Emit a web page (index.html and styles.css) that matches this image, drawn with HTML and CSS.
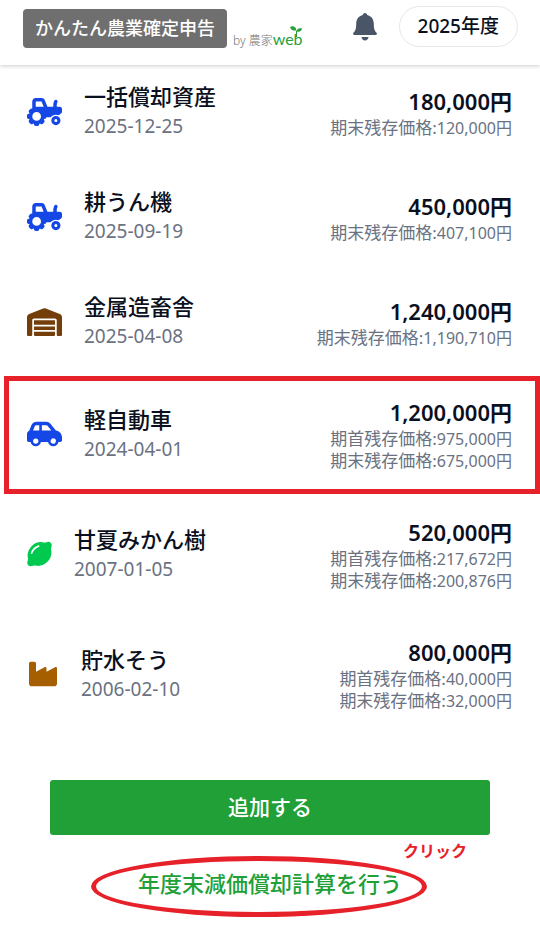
FILE: index.html
```html
<!DOCTYPE html>
<html lang="ja">
<head>
<meta charset="utf-8">
<meta name="viewport" content="width=device-width, initial-scale=1">
<title>かんたん農業確定申告</title>
<link rel="stylesheet" href="styles.css">
</head>
<body>
<svg class="sprite" aria-hidden="true">
  <symbol id="tractor" viewBox="0 0 640 512"><path fill-rule="evenodd" d="M96 64c0-35.300 28.700-64 64-64H266.300c26.200 0 49.700 15.900 59.400 40.200L373.700 160H480V126.200c0-24.800 5.800-49.300 16.900-71.600l2.500-5c7.900-15.800 27.100-22.200 42.900-14.300s22.200 27.100 14.300 42.900l-2.500 5c-6.700 13.300-10.100 28-10.100 42.900V160h56c22.100 0 40 17.900 40 40v45.400c0 16.500-8.500 31.900-22.600 40.700l-43.300 27.100c-14.200-5.900-29.800-9.200-46.100-9.200c-39.300 0-74.100 18.900-96 48H352c0 17.700-14.300 32-32 32h-8.200c-1.700 4.800-3.700 9.500-5.800 14.100l5.800 5.800c12.500 12.500 12.500 32.800 0 45.300l-22.600 22.600c-12.500 12.500-32.800 12.500-45.300 0l-5.800-5.800c-4.600 2.200-9.300 4.100-14.100 5.800V480c0 17.700-14.300 32-32 32H160c-17.700 0-32-14.300-32-32v-8.200c-4.800-1.700-9.500-3.700-14.100-5.800l-5.800 5.800c-12.500 12.500-32.800 12.500-45.300 0L40.200 449.100c-12.500-12.500-12.500-32.800 0-45.300l5.800-5.800c-2.200-4.600-4.100-9.300-5.800-14.100H32c-17.700 0-32-14.300-32-32V320c0-17.700 14.300-32 32-32h8.200c1.700-4.800 3.700-9.500 5.800-14.100l-5.800-5.800c-12.500-12.500-12.500-32.800 0-45.300l22.600-22.600c9-9 21.900-11.500 33.100-7.600V64zm170.300 0H160v96H304.700L266.300 64zM176 256a80 80 0 1 0 0 160 80 80 0 1 0 0-160zM528 328a84 84 0 1 1 0 168 84 84 0 1 1 0-168zm0 56a28 28 0 1 0 0 56 28 28 0 1 0 0-56z"/></symbol>
  <symbol id="warehouse" viewBox="0 0 640 512"><path d="M0 488V171.300c0-26.200 15.900-49.700 40.200-59.400L308.100 4.800c7.600-3.100 16.100-3.100 23.800 0L599.800 111.900c24.300 9.700 40.200 33.300 40.200 59.400V488c0 13.300-10.700 24-24 24H568c-13.300 0-24-10.700-24-24V224c0-17.700-14.300-32-32-32H128c-17.700 0-32 14.300-32 32V488c0 13.300-10.700 24-24 24H24c-13.300 0-24-10.700-24-24zm488 24H152c-13.300 0-24-10.700-24-24V432H512v56c0 13.300-10.700 24-24 24zM128 400V336H512v64H128zm0-96V224H512v80H128z"/></symbol>
  <symbol id="car" viewBox="0 0 640 512"><path d="M171.300 96H224v96H111.300l30.400-75.900C146.500 104 158.200 96 171.300 96zM272 192V96h81.200c9.700 0 18.900 4.400 25 12l67 84H272zm256.200 1L428.200 68c-18.200-22.800-45.800-36-75-36H171.300c-39.300 0-74.600 23.900-89.100 60.300L40.600 196.400C16.800 205.800 0 228.900 0 256V368c0 17.700 14.300 32 32 32H65.300c7.600 45.400 47.100 80 94.700 80s87.100-34.600 94.700-80H385.300c7.600 45.400 47.100 80 94.700 80s87.100-34.600 94.700-80H608c17.700 0 32-14.300 32-32V320c0-65.200-48.800-119-111.800-127zM434.700 368a48 48 0 1 1 90.500 32 48 48 0 1 1-90.500-32zM160 336a48 48 0 1 1 0 96 48 48 0 1 1 0-96z"/></symbol>
  <symbol id="lemon" viewBox="0 0 448 512"><path d="M448 96c0-35.300-28.700-64-64-64c-6.600 0-13 1-19 2.900c-22.500 7-48.100 14.900-71 9c-75.200-19.100-156.400 11-213.700 68.300S-7.200 250.800 11.900 326c5.800 22.900-2 48.400-9 71C1 403 0 409.400 0 416c0 35.300 28.700 64 64 64c6.600 0 13-1 19.100-2.900c22.500-7 48.100-14.900 71-9c75.200 19.100 156.400-11 213.700-68.300s87.500-138.500 68.300-213.700c-5.800-22.900 2-48.400 9-71c1.900-6 2.900-12.400 2.900-19.100zM212.500 127.400c-54.600 16-101.100 62.500-117.100 117.100C92.900 253 84 257.800 75.500 255.400S62.200 244 64.600 235.500c19.100-65.100 73.700-119.800 138.900-138.900c8.500-2.500 17.400 2.400 19.900 10.900s-2.400 17.400-10.900 19.900z"/></symbol>
  <symbol id="factory" viewBox="0 0 576 512"><path d="M64 32C46.300 32 32 46.300 32 64V432c0 26.500 21.500 48 48 48H496c26.500 0 48-21.500 48-48V152.200c0-18.200-19.400-29.700-35.400-21.100L352 215.400V152.200c0-18.200-19.400-29.700-35.400-21.100L160 215.400V64c0-17.700-14.300-32-32-32H64z"/></symbol>
</svg>

<header class="header">
  <a class="brand" href="#">
    <span class="brand-name">かんたん農業確定申告</span>
    <span class="brand-by">by 農家<span class="brand-web">web<svg class="sprout" viewBox="0 0 12 12" aria-hidden="true"><path d="M0 1C3-.5 6 .5 6.300 4.500 3 5 1 4 0 1zM12 2.500C9 1.500 6.600 3 6.800 5.600 9.500 6.200 11.500 5.500 12 2.500z"/><path class="stem" d="M6.500 4.500V11"/></svg></span></span>
  </a>
  <button class="bell" type="button" aria-label="お知らせ">
    <svg viewBox="0 0 24 28" aria-hidden="true"><path d="M12 0c1.200 0 2 .8 2.100 2 4.300.9 6.700 4.400 6.700 8.800 0 5.200.8 6.900 2.700 8.900.9 1 .4 2.300-.9 2.300H1.400C.1 22-.4 20.700.5 19.700c1.900-2 2.700-3.700 2.700-8.900C3.200 6.400 5.600 2.900 9.900 2 10 .8 10.800 0 12 0zM8.400 24h7.200c-.3 2-1.700 3.400-3.600 3.400S8.700 26 8.400 24z"/></svg>
  </button>
  <button class="year" type="button">2025年度</button>
</header>

<main>
  <ul class="assets">
    <li class="asset">
      <svg class="icon icon-wide blue" aria-hidden="true"><use href="#tractor"/></svg>
      <div class="info"><p class="name">一括償却資産</p><p class="date">2025-12-25</p></div>
      <div class="values"><p class="amount">180,000円</p><p class="rest"><span class="label">期末残存価格:</span>120,000円</p></div>
    </li>
    <li class="asset">
      <svg class="icon icon-wide blue" aria-hidden="true"><use href="#tractor"/></svg>
      <div class="info"><p class="name">耕うん機</p><p class="date">2025-09-19</p></div>
      <div class="values"><p class="amount">450,000円</p><p class="rest"><span class="label">期末残存価格:</span>407,100円</p></div>
    </li>
    <li class="asset">
      <svg class="icon icon-wide brown" aria-hidden="true"><use href="#warehouse"/></svg>
      <div class="info"><p class="name">金属造畜舎</p><p class="date">2025-04-08</p></div>
      <div class="values"><p class="amount">1,240,000円</p><p class="rest"><span class="label">期末残存価格:</span>1,190,710円</p></div>
    </li>
    <li class="asset marked">
      <svg class="icon icon-wide blue" aria-hidden="true"><use href="#car"/></svg>
      <div class="info"><p class="name">軽自動車</p><p class="date">2024-04-01</p></div>
      <div class="values"><p class="amount">1,200,000円</p><p class="rest"><span class="label">期首残存価格:</span>975,000円</p><p class="rest"><span class="label">期末残存価格:</span>675,000円</p></div>
    </li>
    <li class="asset">
      <svg class="icon icon-narrow green" aria-hidden="true"><use href="#lemon"/></svg>
      <div class="info"><p class="name">甘夏みかん樹</p><p class="date">2007-01-05</p></div>
      <div class="values"><p class="amount">520,000円</p><p class="rest"><span class="label">期首残存価格:</span>217,672円</p><p class="rest"><span class="label">期末残存価格:</span>200,876円</p></div>
    </li>
    <li class="asset">
      <svg class="icon icon-medium ochre" aria-hidden="true"><use href="#factory"/></svg>
      <div class="info"><p class="name">貯水そう</p><p class="date">2006-02-10</p></div>
      <div class="values"><p class="amount">800,000円</p><p class="rest"><span class="label">期首残存価格:</span>40,000円</p><p class="rest"><span class="label">期末残存価格:</span>32,000円</p></div>
    </li>
  </ul>
  <div class="actions">
    <button class="add" type="button">追加する</button>
    <a class="calc" href="#">年度末減価償却計算を行う<span class="hint">クリック</span></a>
  </div>
</main>
</body>
</html>
```
FILE: styles.css
```css
* {
  box-sizing: border-box;
}

body {
  margin: 0;
  background: #fff;
  color: #0b1020;
  font-family: "Noto Sans", "Noto Sans CJK JP", sans-serif;
}

p,
ul {
  margin: 0;
  padding: 0;
}

button {
  font: inherit;
  cursor: pointer;
}

a {
  text-decoration: none;
}

.sprite {
  display: none;
}

.header {
  position: sticky;
  top: 0;
  z-index: 1;
  display: flex;
  align-items: flex-start;
  height: 65px;
  padding: 6px 22px 0 23px;
  background: #fff;
  box-shadow: 0 1px 4px rgba(0, 0, 0, 0.2);
}

.brand {
  display: flex;
  align-items: flex-end;
  gap: 6px;
  margin-top: 3px;
}

.brand-name {
  padding: 0 12px;
  border-radius: 4px;
  background: #6f6f6f;
  color: #fff;
  font-size: 18px;
  font-weight: 500;
  line-height: 39px;
}

.brand-by {
  color: #777;
  font-size: 12px;
  font-weight: 300;
  line-height: 14px;
  white-space: nowrap;
}

.brand-web {
  position: relative;
  color: #27a03c;
  font-family: Lato, sans-serif;
  font-size: 16px;
  font-weight: 400;
}

.sprout {
  position: absolute;
  right: 1px;
  top: -3px;
  width: 12px;
  height: 12px;
  fill: #27a03c;
}

.stem {
  fill: none;
  stroke: #27a03c;
}

.bell {
  width: 24px;
  height: 28px;
  margin: 7px 22px 0 auto;
  padding: 0;
  border: 0;
  background: none;
}

.bell svg {
  display: block;
  fill: #4a5568;
}

.year {
  height: 41px;
  padding: 0 18px 3px;
  border: 1px solid #e5e7eb;
  border-radius: 21px;
  background: #fff;
  color: #0b1020;
  font-size: 19px;
  font-weight: 500;
}

.assets {
  list-style: none;
}

.asset {
  position: relative;
  display: flex;
  align-items: center;
  gap: 22px;
  padding: 22px 28px 22px 27px;
}

.asset:first-child {
  padding-top: 16px;
}

.marked::after {
  content: "";
  position: absolute;
  inset: 2px 0 0 4px;
  border: 5px solid #e62129;
}

.icon {
  flex: none;
  height: 28px;
  fill: currentColor;
}

.icon-wide {
  width: 35px;
}

.icon-medium {
  width: 32px;
}

.icon-narrow {
  width: 25px;
}

.blue {
  color: #1447e6;
}

.brown {
  color: #733e0a;
}

.green {
  color: #00c950;
}

.ochre {
  color: #a65f00;
}

.name {
  font-size: 22px;
  font-weight: 500;
  line-height: 30px;
}

.date {
  color: #6a7282;
  font-size: 19px;
  line-height: 31px;
}

.values {
  margin-left: auto;
  text-align: right;
}

.amount {
  font-size: 22px;
  font-weight: 600;
  line-height: 32px;
}

.rest {
  color: #6a7282;
  font-size: 16px;
  line-height: 22px;
}

.label {
  font-size: 17px;
}

.actions {
  display: flex;
  flex-direction: column;
  align-items: center;
  padding: 46px 50px 32px;
}

.add {
  align-self: stretch;
  height: 55px;
  padding: 0 0 4px;
  border: 0;
  border-radius: 3px;
  background: #21a038;
  color: #fff;
  font-size: 21px;
  font-weight: 500;
}

.calc {
  position: relative;
  margin-top: 32px;
  color: #21a038;
  font-size: 22px;
  font-weight: 500;
  line-height: 33px;
}

.calc::after {
  content: "";
  position: absolute;
  inset: -11px -25px -17px -47px;
  border: 5px solid #e62129;
  border-radius: 50%;
}

.hint {
  position: absolute;
  right: -65px;
  top: -32px;
  color: #e62129;
  font-size: 16px;
  font-weight: 600;
}
```
